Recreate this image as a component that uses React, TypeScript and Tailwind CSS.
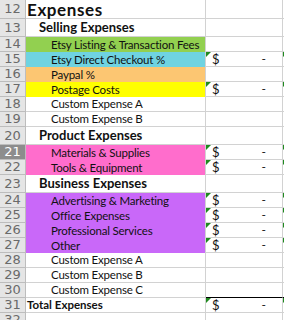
import { FC } from 'react'

type Row = {
    n: number;
    h: number;
    label?: string;
    kind?: 'title' | 'section' | 'item' | 'total';
    fill?: string;
    money?: boolean;
    selected?: boolean;
    blackBottom?: boolean;
}

const rows: Row[] = [
    { n: 12, h: 19, label: 'Expenses', kind: 'title' },
    { n: 13, h: 18, label: 'Selling Expenses', kind: 'section' },
    { n: 14, h: 15, label: 'Etsy Listing & Transaction Fees', kind: 'item', fill: 'bg-[#92d050]' },
    { n: 15, h: 15, label: 'Etsy Direct Checkout %', kind: 'item', fill: 'bg-[#6fd3e1]', money: true },
    { n: 16, h: 15, label: 'Paypal %', kind: 'item', fill: 'bg-[#fcc672]' },
    { n: 17, h: 15, label: 'Postage Costs', kind: 'item', fill: 'bg-[#ffff00]', money: true },
    { n: 18, h: 15, label: 'Custom Expense A', kind: 'item' },
    { n: 19, h: 15, label: 'Custom Expense B', kind: 'item' },
    { n: 20, h: 18, label: 'Product Expenses', kind: 'section' },
    { n: 21, h: 15, label: 'Materials & Supplies', kind: 'item', fill: 'bg-[#ff6dcc]', money: true, selected: true },
    { n: 22, h: 15, label: 'Tools & Equipment', kind: 'item', fill: 'bg-[#ff6dcc]', money: true },
    { n: 23, h: 18, label: 'Business Expenses', kind: 'section' },
    { n: 24, h: 15, label: 'Advertising & Marketing', kind: 'item', fill: 'bg-[#c968f9]', money: true },
    { n: 25, h: 15, label: 'Office Expenses', kind: 'item', fill: 'bg-[#c968f9]', money: true },
    { n: 26, h: 15, label: 'Professional Services', kind: 'item', fill: 'bg-[#c968f9]', money: true },
    { n: 27, h: 15, label: 'Other', kind: 'item', fill: 'bg-[#c968f9]', money: true },
    { n: 28, h: 15, label: 'Custom Expense A', kind: 'item' },
    { n: 29, h: 15, label: 'Custom Expense B', kind: 'item' },
    { n: 30, h: 15, label: 'Custom Expense C', kind: 'item', blackBottom: true },
    { n: 31, h: 15, label: 'Total Expenses', kind: 'total', money: true },
    { n: 32, h: 15 },
]

const labelClass = {
    title: 'pl-[1px] pt-[2px] text-[17px] font-bold tracking-[0.6px] leading-[16px]',
    section: 'pl-[13px] text-[13px] font-bold leading-none',
    item: 'pl-[25px] text-[11.5px] tracking-[-0.2px] leading-none',
    total: 'pl-[1px] text-[11.5px] font-bold leading-none',
}

const Flag: FC = () => (
    <span className="absolute left-0 top-0 w-0 h-0 border-t-[5px] border-t-[#1f8a1f] border-r-[5px] border-r-transparent" />
)

const App: FC = () => {
    return (
        <div className="w-[284px] h-[320px] overflow-hidden bg-white font-['Lato','Liberation_Sans',sans-serif] text-[#111]">
            {rows.map(row => (
                <div key={row.n} className="flex shrink-0" style={{ height: row.h }}>
                    <div className={`w-[26px] shrink-0 flex items-center justify-center border-r border-b border-[#bdbdbd] font-['DejaVu_Sans',sans-serif] text-[13px] ${row.selected ? 'bg-[#8d8d8d] text-white' : 'bg-[#e5e5e5] text-[#6a6a6a]'}`}>
                        {row.n}
                    </div>
                    <div className={`w-[180px] shrink-0 flex items-center border-r border-[#d2d2d2] whitespace-nowrap ${row.fill ? row.fill : 'border-b'}`}>
                        {row.label && row.kind && <span className={labelClass[row.kind]}>{row.label}</span>}
                    </div>
                    <div className={`relative w-[77px] shrink-0 flex items-center border-r border-b border-r-[#d2d2d2] ${row.blackBottom ? 'border-b-black' : 'border-b-[#d2d2d2]'}`}>
                        {row.money && (
                            <>
                                <Flag />
                                <span className="pl-[6px] text-[13px] leading-none">$</span>
                                <span className="ml-[42px] text-[12px] leading-none">-</span>
                            </>
                        )}
                    </div>
                    <div className={`relative flex-1 border-b ${row.blackBottom ? 'border-b-black' : 'border-b-[#d2d2d2]'}`}>
                        {row.money && <Flag />}
                    </div>
                </div>
            ))}
        </div>
    )
}

export default App;
